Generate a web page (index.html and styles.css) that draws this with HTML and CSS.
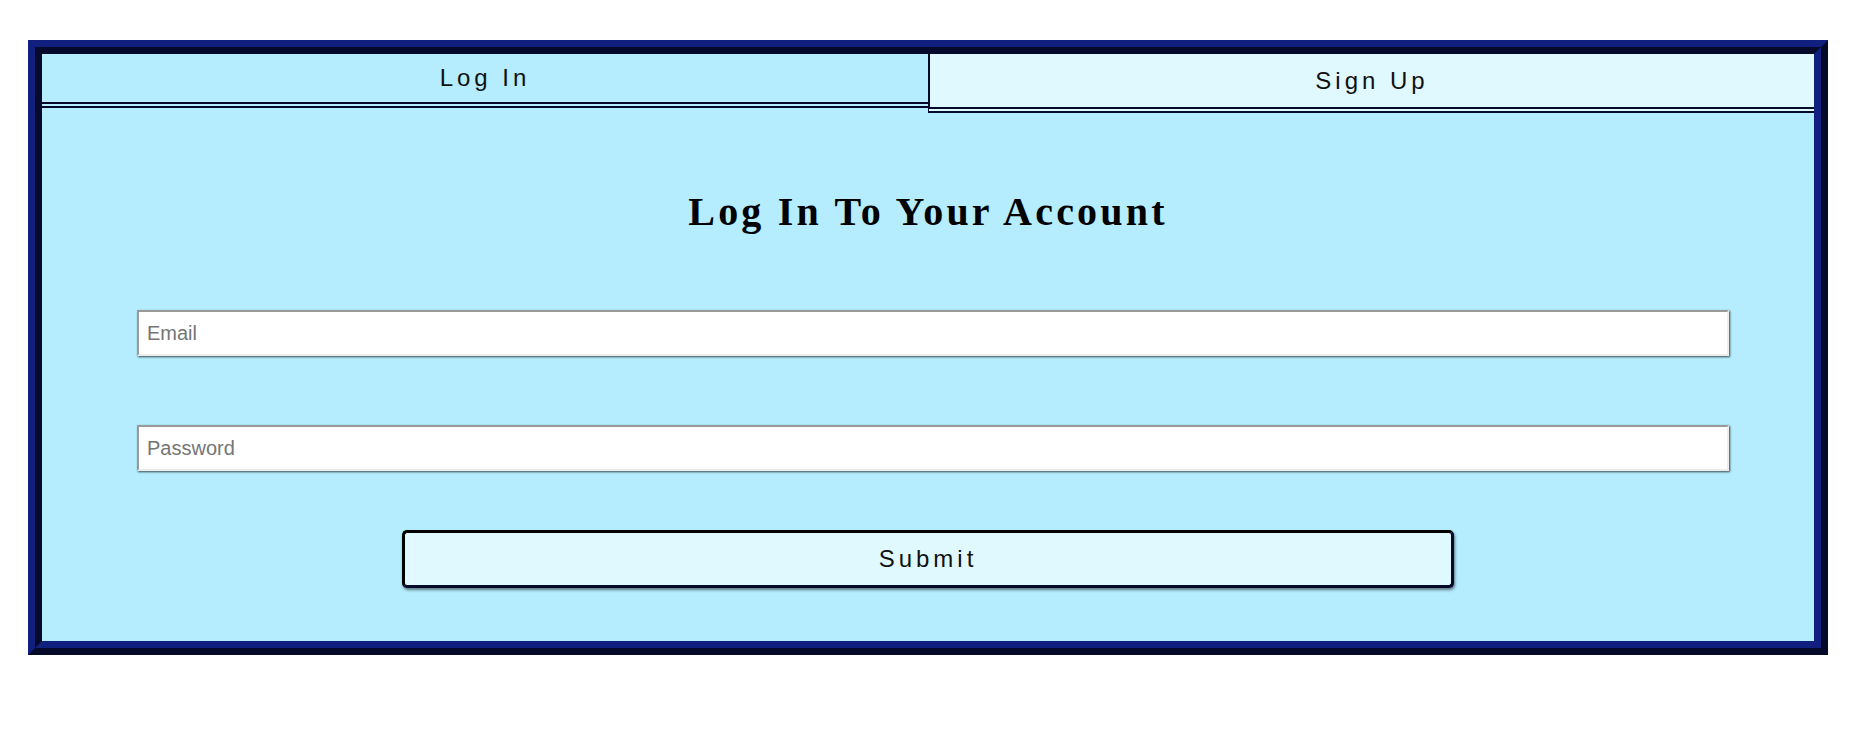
FILE: index.html
```html
<!DOCTYPE html>
<html lang="en">
<head>
<meta charset="utf-8">
<title>Log In</title>
<link rel="stylesheet" href="styles.css">
</head>
<body>
<div class="auth-frame">
  <div class="auth-box">
    <div class="tabs">
      <button class="tab tab-login" type="button">Log In</button>
      <button class="tab tab-signup" type="button">Sign Up</button>
    </div>
    <form class="auth-form">
      <h1 class="auth-title">Log In To Your Account</h1>
      <input class="field field-email" type="email" placeholder="Email">
      <input class="field field-password" type="password" placeholder="Password">
      <button class="submit" type="button">Submit</button>
    </form>
  </div>
</div>
</body>
</html>
```

FILE: styles.css
```css
html, body {
  margin: 0;
  padding: 0;
  background: #ffffff;
}

body {
  font-family: "Liberation Sans", Arial, sans-serif;
}

.auth-frame {
  box-sizing: border-box;
  width: 1800px;
  margin: 40px 0 0 28px;
  border-style: solid;
  border-width: 7px;
  border-color: #11207e #050a2a #050a2a #11207e;
}

.auth-box {
  border-style: solid;
  border-width: 7px;
  border-color: #050a2a #11207e #11207e #050a2a;
  background: #b5edfe;
}

.tabs {
  display: flex;
  align-items: flex-start;
}

.tab {
  font-family: "Liberation Sans", Arial, sans-serif;
  font-size: 24px;
  letter-spacing: 4px;
  color: #111111;
  margin: 0;
  padding: 0;
  border: none;
  border-bottom: 6px double #050a2a;
  box-sizing: content-box;
  cursor: pointer;
}

.tab-login {
  width: 886px;
  height: 48px;
  background: #b5edfe;
}

.tab-signup {
  flex: 1;
  height: 53px;
  background: #e0f9ff;
  border-left: 2px solid #050a2a;
}

.auth-form {
  display: flex;
  flex-direction: column;
  align-items: flex-start;
  padding: 0 0 53px 95px;
  margin: 0;
}

.auth-title {
  align-self: stretch;
  margin: 75px 95px 74px 0;
  font-family: "Liberation Serif", "Times New Roman", serif;
  font-weight: bold;
  font-size: 40px;
  line-height: 48px;
  letter-spacing: 3.2px;
  text-align: center;
  color: #000000;
}

.field {
  box-sizing: border-box;
  width: 1592px;
  height: 46px;
  margin: 0;
  padding: 0 8px;
  font-family: "Liberation Sans", Arial, sans-serif;
  font-size: 20px;
  color: #222222;
  background: #ffffff;
  border-style: solid;
  border-width: 2px;
  border-color: #9a9a9a #ececec #ececec #9a9a9a;
  box-shadow: 1px 1px 2px rgba(0, 0, 0, 0.7);
  outline: none;
}

.field::placeholder {
  color: #757575;
}

.field-password {
  margin-top: 69px;
}

.submit {
  align-self: flex-start;
  box-sizing: border-box;
  width: 1052px;
  height: 58px;
  margin: 59px 0 0 265px;
  padding: 0;
  font-family: "Liberation Sans", Arial, sans-serif;
  font-size: 24px;
  letter-spacing: 4px;
  color: #111111;
  background: #e0f9ff;
  border: 3px solid #050a2a;
  border-top-color: #000000;
  border-left-color: #000000;
  border-radius: 5px;
  box-shadow: 1px 2px 3px rgba(0, 0, 0, 0.5);
  cursor: pointer;
}
```
